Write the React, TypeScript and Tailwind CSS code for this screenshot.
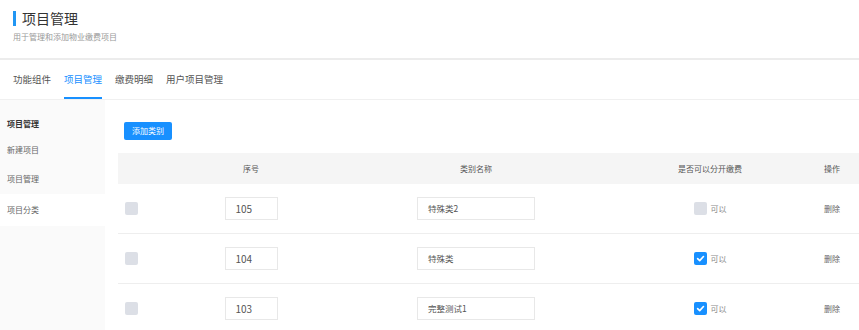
import React from "react";

const rows = [
  { id: "105", name: "特殊类2", split: false },
  { id: "104", name: "特殊类", split: true },
  { id: "103", name: "完整测试1", split: true },
];

const tabs = ["功能组件", "项目管理", "缴费明细", "用户项目管理"];

const Check: React.FC<{ on?: boolean }> = ({ on }) =>
  on ? (
    <span className="flex h-[13px] w-[13px] items-center justify-center rounded-[2px] bg-[#1890ff]">
      <svg width="9" height="9" viewBox="0 0 10 10" fill="none">
        <path d="M1.8 5.2 4.1 7.4 8.3 2.8" stroke="#fff" strokeWidth="1.8" strokeLinecap="round" strokeLinejoin="round" />
      </svg>
    </span>
  ) : (
    <span className="block h-[13px] w-[13px] rounded-[2px] bg-[#dcdfe6]" />
  );

export default function App() {
  return (
    <div
      className="h-[330px] w-[859px] overflow-hidden bg-white text-[#555]"
      style={{ fontFamily: '"Noto Sans CJK SC", "Noto Sans", sans-serif' }}
    >
      {/* page header */}
      <div className="h-[58px] pl-[13px] pt-[8px]">
        <div className="flex items-center gap-[6px]">
          <span className="h-[15px] w-[3px] bg-[#2196f3]" />
          <h1 className="text-[14px] leading-[20px] text-[#333]">项目管理</h1>
        </div>
        <p className="mt-[4px] text-[8px] leading-[10px] text-[#999]">用于管理和添加物业缴费项目</p>
      </div>
      <div className="h-[2px] bg-[#ececec]" />

      {/* tabs */}
      <div className="flex h-[40px] gap-[13px] border-b border-[#f0f0f0] pl-[13px]">
        {tabs.map((t, i) => (
          <div
            key={t}
            className={`flex items-center border-b-2 pt-[2px] text-[9.5px] ${
              i === 1 ? "border-[#1890ff] text-[#1890ff]" : "border-transparent text-[#555]"
            }`}
          >
            {t}
          </div>
        ))}
      </div>

      <div className="flex">
        {/* sidebar */}
        <div className="h-[230px] w-[105px] shrink-0 bg-[#fafafa] pt-[12px] text-[8px]">
          <div className="flex h-[24px] items-center pl-[7px] font-bold text-[#333]">项目管理</div>
          <div className="flex h-[28px] items-center pl-[7px] text-[#666]">新建项目</div>
          <div className="flex h-[30px] items-center pl-[7px] text-[#666]">项目管理</div>
          <div className="flex h-[32px] items-center bg-white pl-[7px] text-[#666]">项目分类</div>
        </div>

        {/* main */}
        <div className="flex-1 pl-[13px] pt-[22px]">
          <button className="ml-[6px] flex h-[18px] w-[48px] items-center justify-center rounded-[2px] bg-[#1890ff] text-[8px] text-white">
            添加类别
          </button>

          <div className="mt-[13px] w-[741px] text-[8px]">
            <div className="grid h-[31px] grid-cols-[50px_166px_284px_184px_57px] items-center bg-[#f5f5f5] text-[#555]">
              <div />
              <div className="text-center">序号</div>
              <div className="text-center">类别名称</div>
              <div className="text-center">是否可以分开缴费</div>
              <div className="pl-[22px]">操作</div>
            </div>
            {rows.map((r) => (
              <div
                key={r.id}
                className="grid h-[50px] grid-cols-[50px_166px_284px_184px_57px] items-center border-b border-[#eeeeee]"
              >
                <div className="pl-[7px]">
                  <Check />
                </div>
                <div className="flex justify-center">
                  <div className="flex h-[23px] w-[53px] items-center border border-[#e8e8e8] pl-[10px] text-[10px] text-[#555]">
                    {r.id}
                  </div>
                </div>
                <div className="flex justify-center">
                  <div className="flex h-[23px] w-[118px] items-center border border-[#e8e8e8] pl-[10px] text-[8.5px] text-[#555]">
                    {r.name}
                  </div>
                </div>
                <div className="flex items-center justify-center gap-[4px] text-[#888]">
                  <Check on={r.split} />
                  <span>可以</span>
                </div>
                <div className="pl-[22px] text-[#666]">删除</div>
              </div>
            ))}
          </div>
        </div>
      </div>
    </div>
  );
}
